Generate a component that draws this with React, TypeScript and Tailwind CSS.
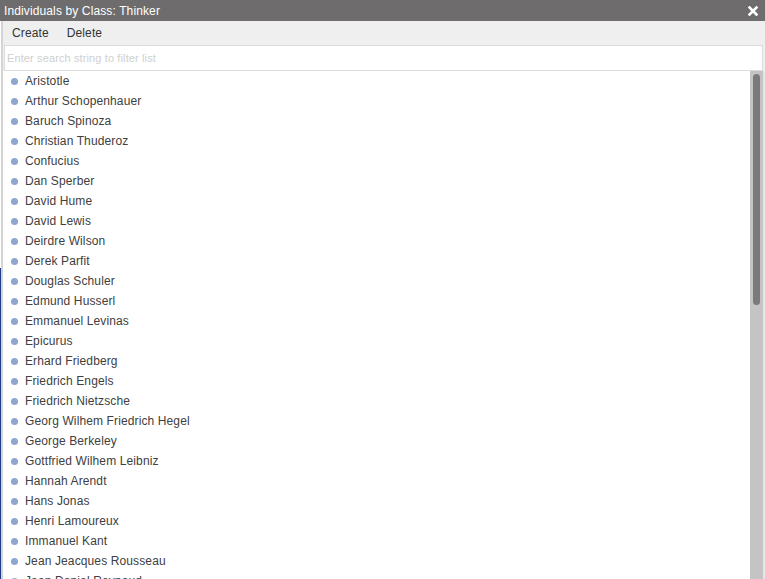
import React from "react";

const thinkers = [
  "Aristotle",
  "Arthur Schopenhauer",
  "Baruch Spinoza",
  "Christian Thuderoz",
  "Confucius",
  "Dan Sperber",
  "David Hume",
  "David Lewis",
  "Deirdre Wilson",
  "Derek Parfit",
  "Douglas Schuler",
  "Edmund Husserl",
  "Emmanuel Levinas",
  "Epicurus",
  "Erhard Friedberg",
  "Friedrich Engels",
  "Friedrich Nietzsche",
  "Georg Wilhem Friedrich Hegel",
  "George Berkeley",
  "Gottfried Wilhem Leibniz",
  "Hannah Arendt",
  "Hans Jonas",
  "Henri Lamoureux",
  "Immanuel Kant",
  "Jean Jeacques Rousseau",
  "Jean Daniel Reynaud",
];

export default function App() {
  return (
    <div className="h-[579px] w-[765px] overflow-hidden bg-white font-['Liberation_Sans',Arial,sans-serif] text-[12px] tracking-[0.12px]">
      {/* title bar */}
      <div className="flex h-[21px] items-center justify-between bg-[#6e6c6c] pl-[4px] pr-[7px] text-white">
        <span>Individuals by Class: Thinker</span>
        <svg width="10" height="10" viewBox="0 0 10 10">
          <path d="M1.5 1.5 L8.5 8.5 M8.5 1.5 L1.5 8.5" stroke="#ffffff" strokeWidth="2.6" strokeLinecap="square" />
        </svg>
      </div>

      <div className="flex h-[558px]">
        {/* left edge of window behind */}
        <div className="flex w-[1px] flex-col">
          <div className="h-[247px] bg-white" />
          <div className="flex-1 bg-[#1d3d8c]" />
        </div>

        <div className="flex min-w-0 flex-1 flex-col border-l-2 border-[#d4d4d4] bg-[#efefef]">
          {/* toolbar */}
          <div className="flex h-[24px] items-center gap-[18px] pl-[9px] text-[#333]">
            <span>Create</span>
            <span>Delete</span>
          </div>

          {/* search */}
          <div className="pr-[2px] pl-[1px]">
            <input
              className="h-[26px] w-full border border-[#dcdcdc] bg-white px-[2px] text-[11px] text-[#333] outline-none placeholder:text-[#cfcfcf]"
              placeholder="Enter search string to filter list"
            />
          </div>

          {/* list + scrollbar */}
          <div className="flex min-h-0 flex-1">
            <div className="min-w-0 flex-1 overflow-hidden bg-white">
              {thinkers.map((name) => (
                <div key={name} className="flex h-[20px] items-center text-[#404040]">
                  <span className="ml-[8px] mr-[7px] h-[7px] w-[7px] rounded-full bg-[#8fa7d0]" />
                  <span className="whitespace-nowrap">{name}</span>
                </div>
              ))}
            </div>
            <div className="w-[13px] bg-[#c4c4c4] px-[3px] pt-[3px]">
              <div className="h-[231px] rounded-[4px] bg-[#7a7a7a]" />
            </div>
            <div className="w-[2px] bg-[#e6e6e6]" />
          </div>
        </div>
      </div>
    </div>
  );
}
